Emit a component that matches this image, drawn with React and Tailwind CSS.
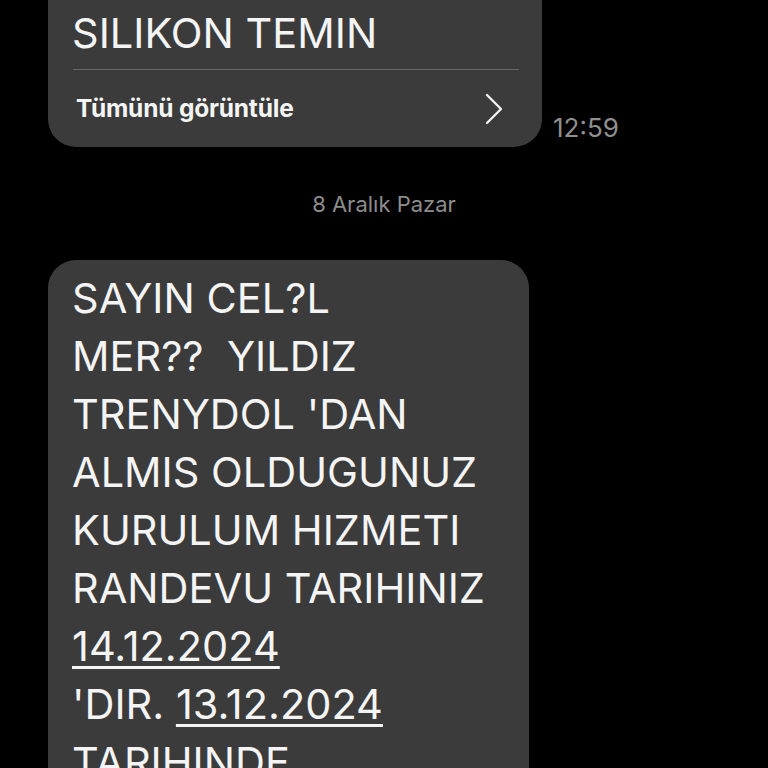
export default function App() {
    const lines = [
        "SAYIN CEL?L",
        "MER??  YILDIZ",
        "TRENYDOL 'DAN",
        "ALMIS OLDUGUNUZ",
        "KURULUM HIZMETI",
        "RANDEVU TARIHINIZ",
    ];

    return (
        <div className="w-[768px] h-[768px] bg-black overflow-hidden text-[#f4f4f4] font-['Inter',sans-serif]">
            {/* previous message */}
            <div className="flex items-end pl-12">
                <div className="w-[494px] bg-[#3b3b3b] rounded-b-[28px] pt-1">
                    <div className="px-6 text-[41.5px] leading-[58px]">SILIKON TEMIN</div>
                    <div className="ml-[25px] mr-[23px] mt-[7px] h-px bg-[#676767]" />
                    <div className="flex items-center justify-between h-[77px] pl-7 pr-[38px]">
                        <span className="text-[24.5px] font-bold tracking-[-0.2px]">Tümünü görüntüle</span>
                        <svg width="20" height="32" viewBox="0 0 20 32" fill="none">
                            <path d="M3 2 L17 16 L3 30" stroke="#f0f0f0" strokeWidth="2.4" strokeLinecap="round" strokeLinejoin="round" />
                        </svg>
                    </div>
                </div>
                <span className="ml-[11px] mb-[3px] text-[26px] leading-[32px] text-[#8f8f8f]">12:59</span>
            </div>

            {/* date divider */}
            <div className="mt-[45px] text-center text-[22px] leading-[24px] text-[#8c8c8c]">8 Aralık Pazar</div>

            {/* sms */}
            <div className="ml-12 mt-[44px] w-[481px] bg-[#3b3b3b] rounded-[28px] pt-[9px] pl-6 pb-8 text-[41.5px] leading-[58px]">
                {lines.map((l) => (
                    <div key={l} className="whitespace-pre">{l}</div>
                ))}
                <div>
                    <span className="underline decoration-[3px] underline-offset-[5px]">14.12.2024</span>
                </div>
                <div className="whitespace-pre">
                    'DIR. <span className="underline decoration-[3px] underline-offset-[5px]">13.12.2024</span>
                </div>
                <div>TARIHINDE</div>
                <div>KURULUM</div>
            </div>
        </div>
    );
}
